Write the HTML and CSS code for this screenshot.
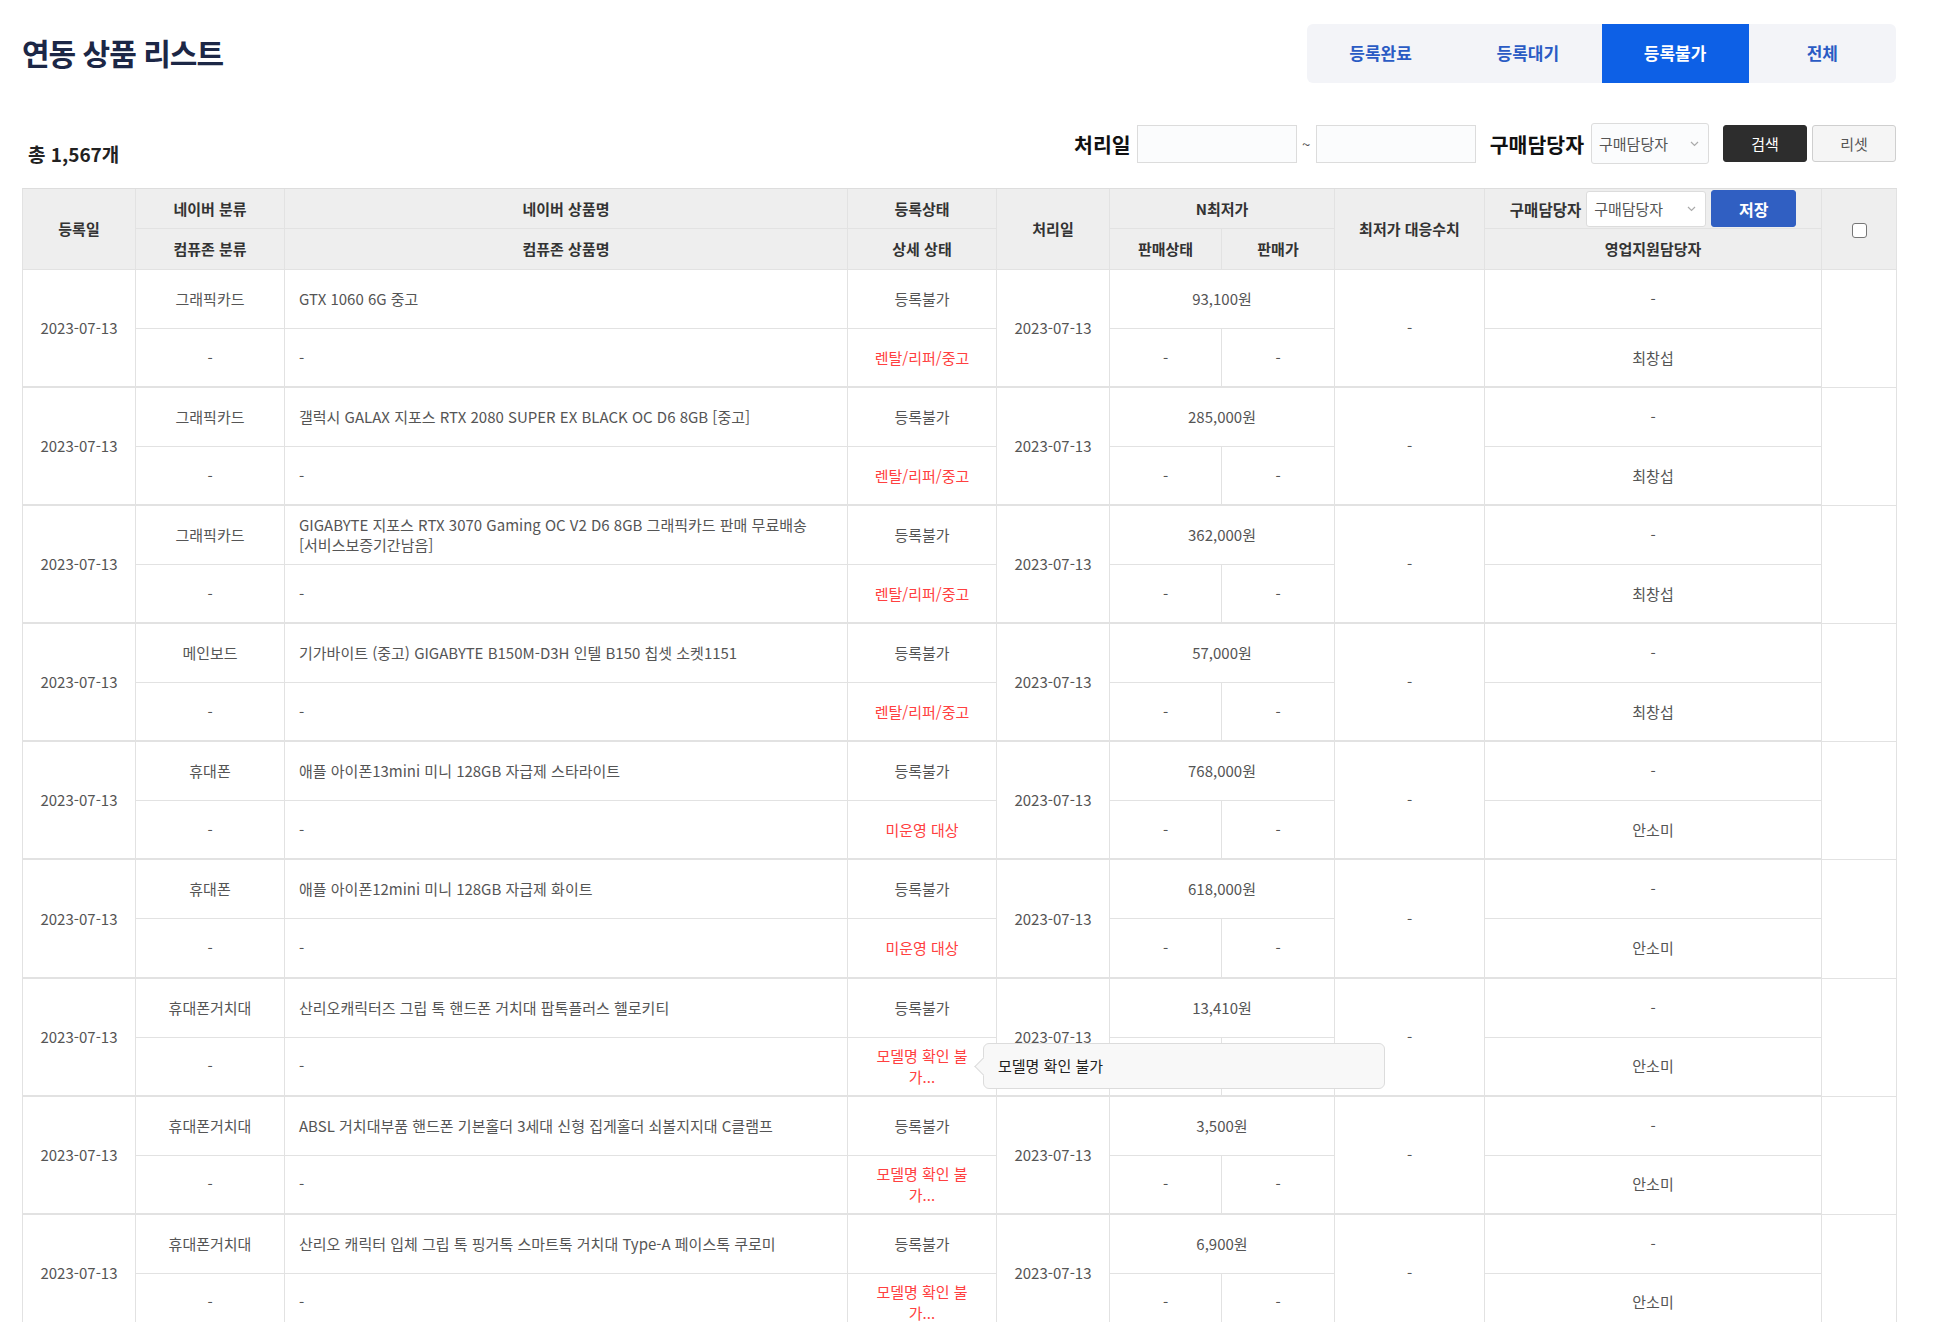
FILE: index.html
```html
<!DOCTYPE html>
<html lang="ko">
<head>
<meta charset="utf-8">
<title>연동 상품 리스트</title>
<link rel="stylesheet" href="styles.css">
</head>
<body>
<div class="page">
  <div class="topbar">
    <h1 class="title">연동 상품 리스트</h1>
    <div class="tabs">
      <div class="tab">등록완료</div>
      <div class="tab">등록대기</div>
      <div class="tab active">등록불가</div>
      <div class="tab">전체</div>
    </div>
  </div>

  <div class="filterbar">
    <div class="count">총 1,567개</div>
    <div class="filters">
      <span class="flabel">처리일</span>
      <div class="finput"></div>
      <span class="tilde">~</span>
      <div class="finput"></div>
      <span class="flabel second">구매담당자</span>
      <div class="fselect big"><span>구매담당자</span><svg width="9" height="6" viewBox="0 0 9 6"><path d="M1 1l3.5 3.5L8 1" fill="none" stroke="#aaa" stroke-width="1.2"/></svg></div>
      <button class="btn dark">검색</button>
      <button class="btn light">리셋</button>
    </div>
  </div>

  <table class="grid">
    <colgroup>
      <col style="width:113px"><col style="width:149px"><col style="width:563px"><col style="width:149px"><col style="width:113px"><col style="width:112px"><col style="width:113px"><col style="width:150px"><col style="width:337px"><col style="width:75px">
    </colgroup>
    <thead>
      <tr class="h1">
        <th rowspan="2">등록일</th>
        <th>네이버 분류</th>
        <th>네이버 상품명</th>
        <th>등록상태</th>
        <th rowspan="2">처리일</th>
        <th colspan="2">N최저가</th>
        <th rowspan="2">최저가 대응수치</th>
        <th class="assign">
          <div class="assign-wrap">
            <span>구매담당자</span>
            <div class="fselect small"><span>구매담당자</span><svg width="9" height="6" viewBox="0 0 9 6"><path d="M1 1l3.5 3.5L8 1" fill="none" stroke="#aaa" stroke-width="1.2"/></svg></div>
            <button class="btn blue">저장</button>
          </div>
        </th>
        <th rowspan="2"><span class="checkbox"></span></th>
      </tr>
      <tr class="h2">
        <th>컴퓨존 분류</th>
        <th>컴퓨존 상품명</th>
        <th>상세 상태</th>
        <th>판매상태</th>
        <th>판매가</th>
        <th>영업지원담당자</th>
      </tr>
    </thead>
    <tbody>
      <tr class="a">
        <td rowspan="2" class="sp">2023-07-13</td>
        <td>그래픽카드</td>
        <td class="name">GTX 1060 6G 중고</td>
        <td>등록불가</td>
        <td rowspan="2" class="sp">2023-07-13</td>
        <td colspan="2">93,100원</td>
        <td rowspan="2" class="sp">-</td>
        <td>-</td>
        <td rowspan="2" class="chk"></td>
      </tr>
      <tr class="b">
        <td>-</td><td class="name">-</td><td class="red">렌탈/리퍼/중고</td><td>-</td><td>-</td><td>최창섭</td>
      </tr>

      <tr class="a">
        <td rowspan="2" class="sp">2023-07-13</td>
        <td>그래픽카드</td>
        <td class="name">갤럭시 GALAX 지포스 RTX 2080 SUPER EX BLACK OC D6 8GB [중고]</td>
        <td>등록불가</td>
        <td rowspan="2" class="sp">2023-07-13</td>
        <td colspan="2">285,000원</td>
        <td rowspan="2" class="sp">-</td>
        <td>-</td>
        <td rowspan="2" class="chk"></td>
      </tr>
      <tr class="b">
        <td>-</td><td class="name">-</td><td class="red">렌탈/리퍼/중고</td><td>-</td><td>-</td><td>최창섭</td>
      </tr>

      <tr class="a">
        <td rowspan="2" class="sp">2023-07-13</td>
        <td>그래픽카드</td>
        <td class="name">GIGABYTE 지포스 RTX 3070 Gaming OC V2 D6 8GB 그래픽카드 판매 무료배송<br>[서비스보증기간남음]</td>
        <td>등록불가</td>
        <td rowspan="2" class="sp">2023-07-13</td>
        <td colspan="2">362,000원</td>
        <td rowspan="2" class="sp">-</td>
        <td>-</td>
        <td rowspan="2" class="chk"></td>
      </tr>
      <tr class="b">
        <td>-</td><td class="name">-</td><td class="red">렌탈/리퍼/중고</td><td>-</td><td>-</td><td>최창섭</td>
      </tr>

      <tr class="a">
        <td rowspan="2" class="sp">2023-07-13</td>
        <td>메인보드</td>
        <td class="name">기가바이트 (중고) GIGABYTE B150M-D3H 인텔 B150 칩셋 소켓1151</td>
        <td>등록불가</td>
        <td rowspan="2" class="sp">2023-07-13</td>
        <td colspan="2">57,000원</td>
        <td rowspan="2" class="sp">-</td>
        <td>-</td>
        <td rowspan="2" class="chk"></td>
      </tr>
      <tr class="b">
        <td>-</td><td class="name">-</td><td class="red">렌탈/리퍼/중고</td><td>-</td><td>-</td><td>최창섭</td>
      </tr>

      <tr class="a">
        <td rowspan="2" class="sp">2023-07-13</td>
        <td>휴대폰</td>
        <td class="name">애플 아이폰13mini 미니 128GB 자급제 스타라이트</td>
        <td>등록불가</td>
        <td rowspan="2" class="sp">2023-07-13</td>
        <td colspan="2">768,000원</td>
        <td rowspan="2" class="sp">-</td>
        <td>-</td>
        <td rowspan="2" class="chk"></td>
      </tr>
      <tr class="b">
        <td>-</td><td class="name">-</td><td class="red">미운영 대상</td><td>-</td><td>-</td><td>안소미</td>
      </tr>

      <tr class="a">
        <td rowspan="2" class="sp">2023-07-13</td>
        <td>휴대폰</td>
        <td class="name">애플 아이폰12mini 미니 128GB 자급제 화이트</td>
        <td>등록불가</td>
        <td rowspan="2" class="sp">2023-07-13</td>
        <td colspan="2">618,000원</td>
        <td rowspan="2" class="sp">-</td>
        <td>-</td>
        <td rowspan="2" class="chk"></td>
      </tr>
      <tr class="b">
        <td>-</td><td class="name">-</td><td class="red">미운영 대상</td><td>-</td><td>-</td><td>안소미</td>
      </tr>

      <tr class="a">
        <td rowspan="2" class="sp">2023-07-13</td>
        <td>휴대폰거치대</td>
        <td class="name">산리오캐릭터즈 그립 톡 핸드폰 거치대 팝톡플러스 헬로키티</td>
        <td>등록불가</td>
        <td rowspan="2" class="sp">2023-07-13</td>
        <td colspan="2">13,410원</td>
        <td rowspan="2" class="sp">-</td>
        <td>-</td>
        <td rowspan="2" class="chk"></td>
      </tr>
      <tr class="b">
        <td>-</td><td class="name">-</td>
        <td class="red tip-cell"><span class="clamp">모델명 확인 불<br>가...</span>
          <div class="tooltip">모델명 확인 불가</div>
        </td>
        <td>-</td><td>-</td><td>안소미</td>
      </tr>

      <tr class="a">
        <td rowspan="2" class="sp">2023-07-13</td>
        <td>휴대폰거치대</td>
        <td class="name">ABSL 거치대부품 핸드폰 기본홀더 3세대 신형 집게홀더 쇠볼지지대 C클램프</td>
        <td>등록불가</td>
        <td rowspan="2" class="sp">2023-07-13</td>
        <td colspan="2">3,500원</td>
        <td rowspan="2" class="sp">-</td>
        <td>-</td>
        <td rowspan="2" class="chk"></td>
      </tr>
      <tr class="b">
        <td>-</td><td class="name">-</td><td class="red"><span class="clamp">모델명 확인 불<br>가...</span></td><td>-</td><td>-</td><td>안소미</td>
      </tr>

      <tr class="a">
        <td rowspan="2" class="sp">2023-07-13</td>
        <td>휴대폰거치대</td>
        <td class="name">산리오 캐릭터 입체 그립 톡 핑거톡 스마트톡 거치대 Type-A 페이스톡 쿠로미</td>
        <td>등록불가</td>
        <td rowspan="2" class="sp">2023-07-13</td>
        <td colspan="2">6,900원</td>
        <td rowspan="2" class="sp">-</td>
        <td>-</td>
        <td rowspan="2" class="chk"></td>
      </tr>
      <tr class="b">
        <td>-</td><td class="name">-</td><td class="red"><span class="clamp">모델명 확인 불<br>가...</span></td><td>-</td><td>-</td><td>안소미</td>
      </tr>
    </tbody>
  </table>
</div>
</body>
</html>
```

FILE: styles.css
```css
* { box-sizing: border-box; }

body {
  margin: 0;
  background: #fff;
  color: #333;
  font-family: "Noto Sans CJK KR", "Noto Sans", sans-serif;
}

.page {
  padding: 24px 42px 0 22px;
}

.topbar {
  display: flex;
  justify-content: space-between;
  align-items: center;
  height: 59px;
}

.title {
  margin: 0 0 4px 0;
  font-size: 30px;
  font-weight: 700;
  color: #1c2746;
  letter-spacing: -1px;
}

.tabs {
  display: flex;
  width: 589px;
  height: 59px;
  background: #f3f4f8;
  border-radius: 6px;
  overflow: hidden;
}

.tab {
  flex: 1;
  display: flex;
  align-items: center;
  justify-content: center;
  padding-bottom: 2px;
  font-size: 17px;
  font-weight: 700;
  color: #2a5bc4;
}

.tab.active {
  background: #0d60e6;
  color: #fff;
}

.filterbar {
  display: flex;
  justify-content: space-between;
  align-items: center;
  margin-top: 40px;
  height: 41px;
}

.count {
  padding-left: 6px;
  margin-top: 20px;
  font-size: 19px;
  font-weight: 700;
  color: #222;
}

.filters {
  display: flex;
  align-items: center;
}

.flabel {
  font-size: 20.5px;
  font-weight: 700;
  color: #111;
  margin-right: 6px;
}

.flabel.second {
  margin-left: 14px;
  margin-right: 7px;
}

.finput {
  width: 160px;
  height: 38px;
  border: 1px solid #dcdcdc;
  background: #fbfcfd;
}

.tilde {
  width: 19px;
  text-align: center;
  font-size: 15px;
  color: #555;
}

.fselect {
  display: flex;
  align-items: center;
  justify-content: space-between;
  background: #fbfcfd;
  border: 1px solid #dcdcdc;
  border-radius: 3px;
  color: #555;
  font-size: 15px;
  font-weight: 400;
  padding: 0 9px 0 7px;
}

.fselect.big {
  width: 118px;
  height: 41px;
}

.fselect.small {
  width: 120px;
  height: 36px;
  background: #fff;
}

.btn {
  font-family: inherit;
  font-size: 15px;
  border-radius: 3px;
  cursor: pointer;
}

.btn.dark {
  width: 84px;
  height: 37px;
  margin-left: 14px;
  background: #2d2d2d;
  border: 1px solid #2d2d2d;
  color: #fff;
}

.btn.light {
  width: 84px;
  height: 37px;
  margin-left: 5px;
  background: #f5f5f5;
  border: 1px solid #cfcfcf;
  color: #555;
}

.btn.blue {
  width: 85px;
  height: 37px;
  background: #305fc2;
  border: 1px solid #305fc2;
  color: #fff;
  font-size: 16px;
  font-weight: 700;
}

.grid {
  width: 1875px;
  margin-top: 24px;
  border-collapse: separate;
  border-spacing: 0;
  table-layout: fixed;
  border-top: 1px solid #dddddd;
  border-left: 1px solid #e2e2e2;
}

.grid th,
.grid td {
  border-right: 1px solid #e2e2e2;
  border-bottom: 1px solid #e2e2e2;
  padding: 0 6px;
  text-align: center;
  vertical-align: middle;
  font-size: 15px;
  line-height: 20px;
}

.grid th {
  background: #eeeeee;
  color: #333;
  font-weight: 700;
}

.grid thead tr.h1 { height: 40px; }
.grid thead tr.h2 { height: 41px; }

.grid tbody tr.a { height: 59px; }
.grid tbody tr.b { height: 59.1px; }

.grid td {
  color: #555;
}

.grid tbody tr.b td,
.grid tbody td.sp {
  border-bottom: 2px solid #e2e2e2;
}

.grid tbody td.chk {
  border-bottom: 1px solid #e2e2e2;
}

.grid td.name {
  text-align: left;
  padding-left: 14px;
  padding-right: 8px;
}

.grid td.red {
  color: #ff4040;
}

.assign-wrap {
  display: flex;
  align-items: center;
  justify-content: center;
  gap: 5px;
}

.assign-wrap > span {
  font-size: 15.5px;
}

.checkbox {
  display: inline-block;
  width: 15px;
  height: 15px;
  border: 1.5px solid #767676;
  border-radius: 3px;
  background: #fff;
  vertical-align: middle;
}

.clamp {
  display: inline-block;
  line-height: 21px;
}

.tip-cell {
  position: relative;
}

.tooltip {
  position: absolute;
  left: 135px;
  top: 5px;
  width: 402px;
  height: 46px;
  background: #f8f8f8;
  border: 1px solid #dcdcdc;
  border-radius: 6px;
  color: #222;
  font-size: 15px;
  text-align: left;
  padding: 0 14px;
  display: flex;
  align-items: center;
  z-index: 5;
}

.tooltip::before {
  content: "";
  position: absolute;
  left: -7px;
  top: 16px;
  width: 12px;
  height: 12px;
  background: #f8f8f8;
  border-left: 1px solid #dcdcdc;
  border-bottom: 1px solid #dcdcdc;
  transform: rotate(45deg);
}
```
